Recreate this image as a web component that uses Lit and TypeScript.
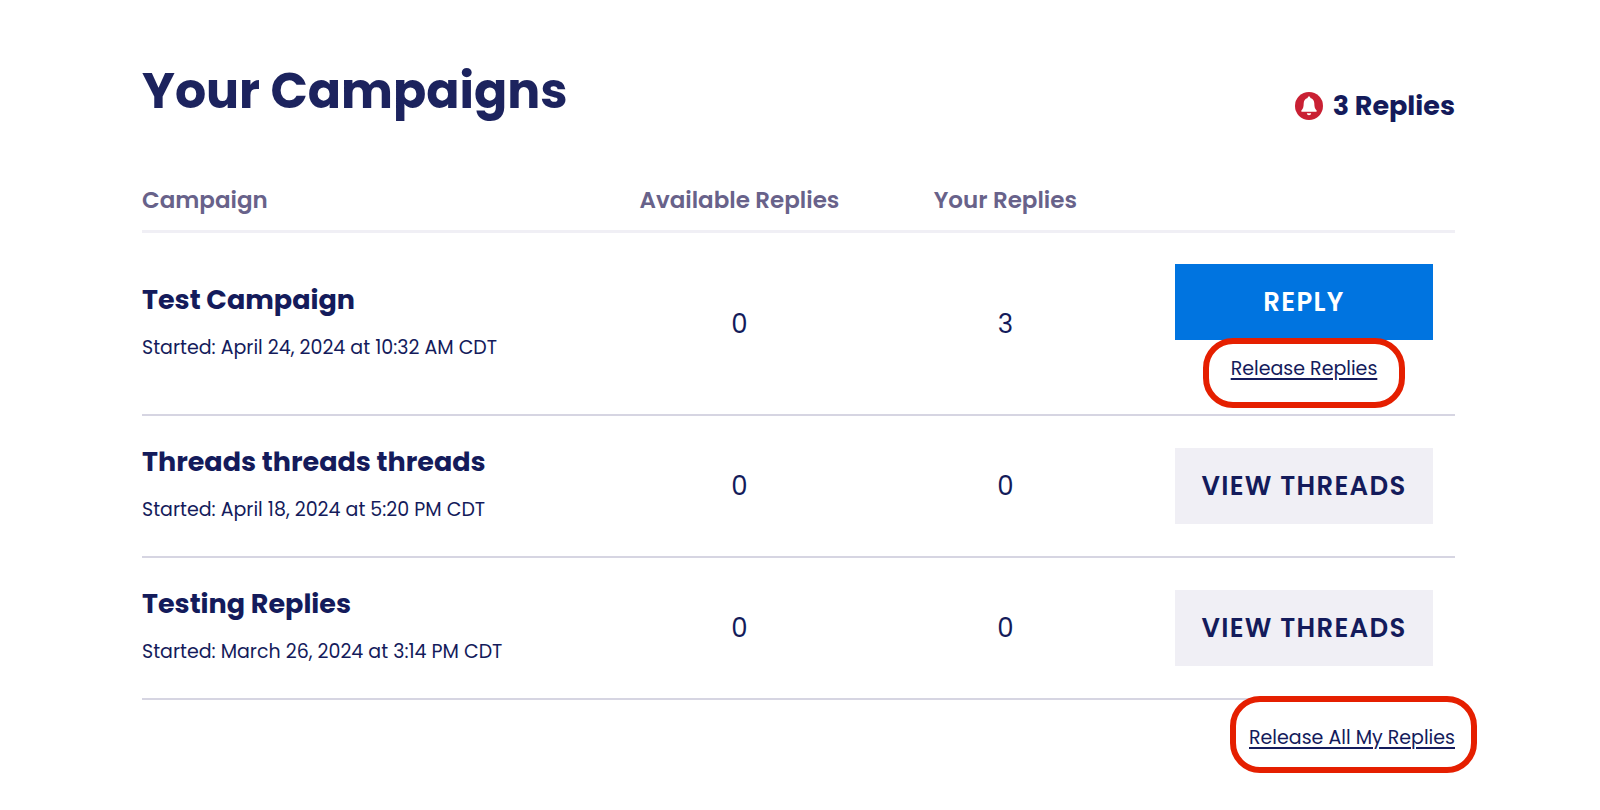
import { LitElement, html, css } from "lit";
import { customElement, state } from "lit/decorators.js";

interface Campaign {
  name: string;
  started: string;
  available: number;
  yours: number;
}

@customElement("app-root")
export class AppRoot extends LitElement {
  static styles = css`
    :host {
      display: block;
      box-sizing: border-box;
      min-height: 100vh;
      padding: 57px 145px 32px 142px;
      background: #fff;
      color: #141b5b;
      font-family: Poppins, Inter, "Open Sans", sans-serif;
      font-size: 19px;
      line-height: 28px;
    }
    .header {
      display: flex;
      justify-content: space-between;
      align-items: flex-end;
    }
    .title {
      margin: 0;
      color: #1c235e;
      font-size: 49px;
      line-height: 68px;
      font-weight: 700;
    }
    .count {
      display: flex;
      align-items: center;
      gap: 10px;
      font-size: 27px;
      line-height: 38px;
      font-weight: 700;
    }
    .bell {
      display: block;
      width: 28px;
      height: 28px;
    }
    .table {
      width: 100%;
      margin-top: 59px;
      border-collapse: separate;
      border-spacing: 0;
      table-layout: fixed;
    }
    .col-available {
      width: 18%;
    }
    .col-yours {
      width: 22.5%;
    }
    .col-action {
      width: 23%;
    }
    th,
    td {
      padding: 0;
      text-align: center;
      vertical-align: middle;
    }
    thead th {
      padding-bottom: 14px;
      border-bottom: 3px solid #f0eff5;
      color: #68628a;
      font-size: 23px;
      line-height: 32px;
      font-weight: 600;
      white-space: nowrap;
    }
    tbody th,
    tbody td {
      padding: 32px 0;
      border-bottom: 2px solid #d6d5e2;
      font-weight: 400;
    }
    tbody tr:first-child > * {
      padding: 31px 0;
    }
    thead .name-cell,
    tbody .name-cell {
      text-align: left;
    }
    .name {
      display: block;
      margin-bottom: 20px;
      font-size: 27px;
      line-height: 28px;
      font-weight: 700;
    }
    .started {
      display: block;
    }
    .number {
      font-size: 26px;
    }
    .action {
      display: flex;
      flex-direction: column;
      align-items: center;
    }
    .button {
      width: 258px;
      height: 76px;
      padding: 0;
      border: 0;
      background: #f0eff5;
      color: #141b5b;
      font: inherit;
      font-size: 26px;
      font-weight: 600;
      letter-spacing: 0.05em;
      cursor: pointer;
    }
    .primary {
      background: #0074e0;
      color: #fff;
    }
    .link {
      color: inherit;
      text-decoration: underline;
      text-decoration-thickness: 2px;
      text-underline-offset: 3px;
    }
    .marked {
      position: relative;
      display: inline-block;
    }
    .action .marked {
      margin-top: 15px;
    }
    .marked::after {
      content: "";
      position: absolute;
      inset: -28px -22px -21px -19px;
      border: 6px solid #e51f00;
      border-radius: 30px;
      pointer-events: none;
    }
    .action .marked::after {
      inset: -17px -28px -25px -28px;
    }
    .footer {
      display: flex;
      justify-content: flex-end;
      padding-top: 24px;
    }
  `;

  @state() private campaigns: Campaign[] = [
    { name: "Test Campaign", started: "April 24, 2024 at 10:32 AM CDT", available: 0, yours: 3 },
    { name: "Threads threads threads", started: "April 18, 2024 at 5:20 PM CDT", available: 0, yours: 0 },
    { name: "Testing Replies", started: "March 26, 2024 at 3:14 PM CDT", available: 0, yours: 0 },
  ];

  private renderAction(c: Campaign) {
    return c.yours > 0
      ? html`<button class="button primary" type="button">REPLY</button>
          <span class="marked"><a class="link" href="#release">Release Replies</a></span>`
      : html`<button class="button" type="button">VIEW THREADS</button>`;
  }

  render() {
    const total = this.campaigns.reduce((sum, c) => sum + c.yours, 0);
    return html`
      <main>
        <header class="header">
          <h1 class="title">Your Campaigns</h1>
          <div class="count">
            <svg class="bell" viewBox="0 0 28 28" aria-hidden="true">
              <circle cx="14" cy="14" r="14" fill="#c92033" />
              <path
                fill="#fff"
                d="M14 4.6c-.8 0-1.2.5-1.4 1.3-2.6.8-3.8 2.9-3.9 5.4-.1 3.3-.4 5.4-2.3 7.3-.4.5-.2 1.2.5 1.2h14.2c.7 0 .9-.7.5-1.2-1.9-1.9-2.2-4-2.3-7.3-.1-2.5-1.3-4.6-3.9-5.4-.2-.8-.6-1.3-1.4-1.3zM11.8 21.2c.2 1.3 1 2 2.2 2s2-.7 2.2-2z"
              />
            </svg>
            <span>${total} Replies</span>
          </div>
        </header>
        <table class="table">
          <colgroup>
            <col />
            <col class="col-available" />
            <col class="col-yours" />
            <col class="col-action" />
          </colgroup>
          <thead>
            <tr>
              <th class="name-cell" scope="col">Campaign</th>
              <th scope="col">Available Replies</th>
              <th scope="col">Your Replies</th>
              <th scope="col" aria-label="Action"></th>
            </tr>
          </thead>
          <tbody>
            ${this.campaigns.map(
              (c) => html`<tr>
                <th class="name-cell" scope="row">
                  <span class="name">${c.name}</span>
                  <span class="started">Started: ${c.started}</span>
                </th>
                <td class="number">${c.available}</td>
                <td class="number">${c.yours}</td>
                <td><div class="action">${this.renderAction(c)}</div></td>
              </tr>`
            )}
          </tbody>
        </table>
        <footer class="footer">
          <span class="marked"><a class="link" href="#release-all">Release All My Replies</a></span>
        </footer>
      </main>
    `;
  }
}
